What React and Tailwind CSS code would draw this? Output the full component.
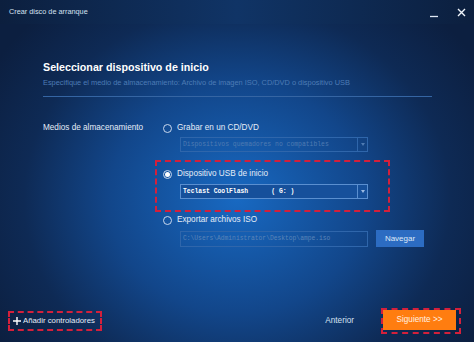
import { useState } from 'react';

const font = { fontFamily: '"Liberation Sans", Arial, sans-serif' };

function Radio({ checked }) {
  return (
    <span className="flex h-[9px] w-[9px] shrink-0 items-center justify-center rounded-full border border-[#c9d8ee]">
      {checked && <span className="h-[5px] w-[5px] rounded-full bg-white" />}
    </span>
  );
}

function Select({ value, disabled }) {
  return (
    <div
      className={`flex h-[15px] w-[188px] items-center border ${
        disabled ? 'border-[#2f66ab] text-[#4f7bb2]' : 'border-[#5a8fd0] bg-[#16509b] text-white font-bold'
      }`}
    >
      <span className="flex-1 truncate pl-[2px] font-['Liberation_Mono',monospace] text-[6.4px] whitespace-pre">
        {value}
      </span>
      <span className={`flex h-full w-[10px] items-center justify-center border-l ${disabled ? 'border-[#2f66ab]' : 'border-[#5a8fd0]'}`}>
        <svg width="4" height="3" viewBox="0 0 4 3">
          <path d="M0 0h4L2 3z" fill={disabled ? '#4f7bb2' : '#9dbbe2'} />
        </svg>
      </span>
    </div>
  );
}

export default function App() {
  const [media, setMedia] = useState('usb');

  return (
    <div
      style={font}
      className="flex h-[342px] w-[474px] flex-col overflow-hidden bg-[radial-gradient(ellipse_60%_75%_at_50%_58%,#1869c2_0%,#12468a_45%,#0e2a55_75%,#0c1f40_100%)] text-[#e4ecf7]"
    >
      {/* title bar */}
      <div className="flex h-[24px] shrink-0 items-center bg-[linear-gradient(90deg,#0c1f3e_0%,#103466_50%,#0c1f3e_100%)] pl-[9px] pr-[8px]">
        <span className="flex-1 text-[7.3px] text-[#d5e1f1]">Crear disco de arranque</span>
        <svg width="8" height="8" viewBox="0 0 8 8" className="mr-[19px] mt-[3px]">
          <path d="M0 6.5h8" stroke="#dfe8f5" strokeWidth="1.3" />
        </svg>
        <svg width="9" height="9" viewBox="0 0 9 9">
          <path d="M1 1l7 7M8 1L1 8" stroke="#f0f5fb" strokeWidth="1.4" />
        </svg>
      </div>

      {/* header */}
      <div className="pl-[43px] pr-[42px] pt-[35px]">
        <h1 className="text-[10.7px] leading-[16px] font-bold text-white">Seleccionar dispositivo de inicio</h1>
        <p className="mt-[2px] text-[7.4px] leading-[12px] text-[#4d7cb6]">
          Especifique el medio de almacenamiento: Archivo de imagen ISO, CD/DVD o dispositivo USB
        </p>
        <div className="mt-[7px] h-px bg-[#3565a3]" />
      </div>

      {/* body */}
      <div className="flex pl-[43px] pt-[25px]">
        <div className="w-[120px] shrink-0 text-[8.2px] leading-[12px]">Medios de almacenamiento</div>
        <div className="flex flex-col">
          <button onClick={() => setMedia('cd')} className="flex h-[12px] items-center gap-[5px] text-[8.2px]">
            <Radio checked={media === 'cd'} />
            <span>Grabar en un CD/DVD</span>
          </button>
          <div className="ml-[17px] mt-[3px]">
            <Select value="Dispositivos quemadores no compatibles" disabled />
          </div>

          <div className="-ml-[8px] mt-[8px] w-[235px] border-2 border-dashed border-[#d4203b] pb-[11px] pl-[6px] pt-[6px]">
            <button onClick={() => setMedia('usb')} className="flex h-[12px] items-center gap-[5px] text-[8.2px]">
              <Radio checked={media === 'usb'} />
              <span>Dispositivo USB de inicio</span>
            </button>
            <div className="ml-[17px] mt-[4px]">
              <Select value="Teclast CoolFlash      ( G: )" />
            </div>
          </div>

          <button onClick={() => setMedia('iso')} className="mt-[2px] flex h-[12px] items-center gap-[5px] text-[8.2px]">
            <Radio checked={media === 'iso'} />
            <span>Exportar archivos ISO</span>
          </button>
          <div className="ml-[17px] mt-[4px] flex items-center gap-[8px]">
            <div className="flex h-[16px] w-[188px] items-center border border-[#2f66ab] pl-[2px] font-['Liberation_Mono',monospace] text-[6.3px] text-[#5a84b8]">
              C:\Users\Administrator\Desktop\ampe.iso
            </div>
            <button className="flex h-[17px] w-[48px] items-center justify-center bg-[#2c6cc2] text-[8px] text-[#dfe9f7]">
              Navegar
            </button>
          </div>
        </div>
      </div>

      {/* footer */}
      <div className="mt-auto flex items-center pb-[8px] pl-[8px] pr-[13px]">
        <div className="flex h-[20px] w-[94px] items-center gap-[2px] whitespace-nowrap border-2 border-dashed border-[#d4203b] pl-[3px] text-[7.8px]">
          <svg width="8" height="8" viewBox="0 0 8 8" className="shrink-0">
            <path d="M4 0v8M0 4h8" stroke="#ffffff" strokeWidth="1.4" />
          </svg>
          <span>Añadir controladores</span>
        </div>
        <span className="ml-auto mr-[27px] text-[8.2px] text-[#d5e1f1]">Anterior</span>
        <div className="border-2 border-dashed border-[#d4203b] pb-[2px] pr-[3px]">
          <button className="flex h-[20px] w-[73px] items-center justify-center bg-[#ff7d10] text-[8.2px] text-[#fff1e2]">
            Siguiente &gt;&gt;
          </button>
        </div>
      </div>
    </div>
  );
}
